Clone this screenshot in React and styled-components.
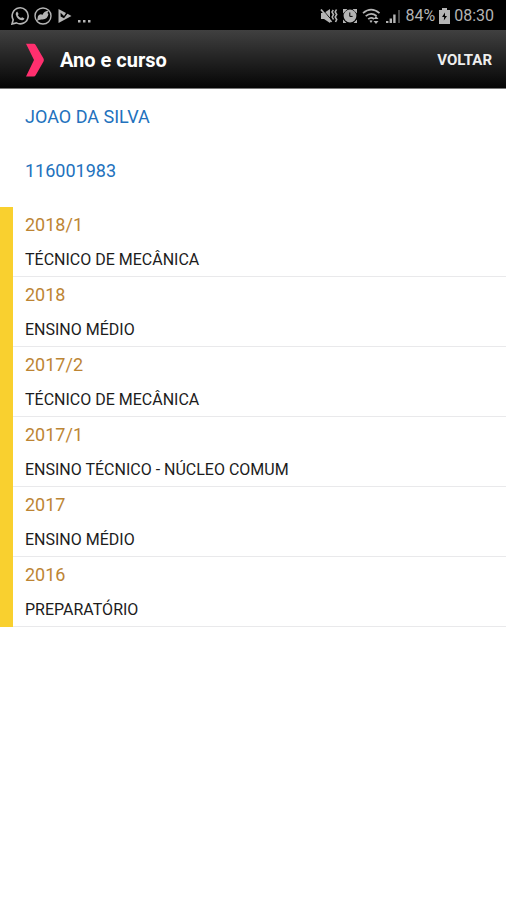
import React from "react";
import styled, { createGlobalStyle } from "styled-components";

const GlobalStyle = createGlobalStyle`
  *, *::before, *::after { box-sizing: border-box; }
  body { margin: 0; background: #fff; font-family: Roboto, "Noto Sans", sans-serif; }
`;

const StatusBar = styled.div`
  display: flex;
  justify-content: space-between;
  align-items: center;
  height: 30px;
  padding: 2px 12px 0 11px;
  background: #000;
  color: #b4b4b4;
  font-size: 16px;
  line-height: 20px;
`;

const StatusGroup = styled.div`
  display: flex;
  align-items: center;
  gap: ${(p) => p.$gap}px;
`;

const StatusIcon = styled.svg`
  display: block;
  flex: none;
  fill: currentColor;
`;

const Header = styled.header`
  display: flex;
  align-items: center;
  height: 59px;
  padding: 1px 14px 0 26px;
  gap: 16px;
  background: linear-gradient(#404040, #050505);
  border-bottom: 1px solid #777;
  color: #fff;
`;

const Title = styled.h1`
  flex: 1;
  margin: 0;
  font-size: 20px;
  font-weight: 700;
  line-height: 24px;
`;

const BackButton = styled.button`
  padding: 0;
  border: 0;
  background: none;
  color: #eee;
  font: 700 15px/20px Roboto, "Noto Sans", sans-serif;
  cursor: pointer;
`;

const Student = styled.section`
  display: grid;
  gap: 30px;
  padding: 16px 25px 24px;
`;

const StudentText = styled.p`
  margin: 0;
  color: #2271bd;
  font-size: 18px;
  line-height: 24px;
`;

const CourseList = styled.ul`
  margin: 0;
  padding: 0;
  list-style: none;
`;

const CourseRow = styled.li`
  display: grid;
  gap: 12px;
  padding: 6px 12px;
  border-left: 13px solid #f9d02f;
  box-shadow: inset 0 -1px #e9e9eb;
`;

const Term = styled.span`
  color: #bd8534;
  font-size: 18px;
  line-height: 24px;
`;

const CourseName = styled.span`
  color: #1c1c1c;
  font-size: 16px;
  line-height: 22px;
`;

const courses = [
  ["2018/1", "TÉCNICO DE MECÂNICA"],
  ["2018", "ENSINO MÉDIO"],
  ["2017/2", "TÉCNICO DE MECÂNICA"],
  ["2017/1", "ENSINO TÉCNICO - NÚCLEO COMUM"],
  ["2017", "ENSINO MÉDIO"],
  ["2016", "PREPARATÓRIO"],
];

const WhatsappIcon = () => (
  <StatusIcon width="18" height="18" viewBox="0 0 18 18" aria-hidden="true">
    <path d="M1 17 2.2 12.8A8 8 0 1 1 5.4 15.9Z" fill="none" stroke="currentColor" strokeWidth="1.6" />
    <path d="M6.2 4.5 7.6 7 6.8 8.2Q8 10.3 10 11.1L11.2 10.2 13.5 11.5Q13 13.5 11 13.3 6 12.5 4.7 7.2 4.7 5 6.2 4.5Z" />
  </StatusIcon>
);

const BirdIcon = () => (
  <StatusIcon width="18" height="18" viewBox="0 0 18 18" aria-hidden="true">
    <circle cx="9" cy="9" r="8" fill="none" stroke="currentColor" strokeWidth="1.4" />
    <path d="M3 14 4 9Q6 6 8.6 7.8 10 4 15 3.5L13.4 6 14.4 7Q13.8 12.2 8.5 12.5 5.2 12 3 14Z" />
  </StatusIcon>
);

const PlayIcon = () => (
  <StatusIcon width="15" height="16" viewBox="0 0 15 16" aria-hidden="true">
    <path d="M1.5 1 9 5 7 8 3.6 4.8V8.5L7 10.2 10.5 5.8 14.5 8 1.5 15Z" />
  </StatusIcon>
);

const MuteIcon = () => (
  <StatusIcon width="18" height="18" viewBox="0 0 18 18" aria-hidden="true">
    <path d="M1 6H4L10 2V16L4 12H1Z" />
    <path d="M2.5 2.5 12 13.5" fill="none" stroke="#000" strokeWidth="1" />
    <path d="M1 2.5 11.5 15" fill="none" stroke="currentColor" strokeWidth="1.8" />
    <path d="M13.3 3 12 5 13.5 7.5 12.2 10 13.5 12.5M16.5 2.5 15.2 5 16.7 7.5 15.2 10 16.7 12.5 15.5 15" fill="none" stroke="currentColor" strokeWidth="1.6" />
  </StatusIcon>
);

const AlarmIcon = () => (
  <StatusIcon width="16" height="16" viewBox="0 0 16 16" aria-hidden="true">
    <circle cx="8" cy="8" r="6.4" />
    <path d="M1 1H5.5L1 5.5ZM15 1H10.5L15 5.5ZM1 15V11.5L4.5 15ZM15 15V11.5L11.5 15Z" />
    <path d="M7.8 4.5V8.4H10.6" fill="none" stroke="#000" strokeWidth="1" />
  </StatusIcon>
);

const WifiIcon = () => (
  <StatusIcon width="20" height="17" viewBox="0 0 20 17" aria-hidden="true">
    <path d="M1 5.2Q9 -1.8 17.5 5.2M3.7 8.2Q9 3.5 14.6 8M6.2 11.2Q9 8.5 12 11" fill="none" stroke="currentColor" strokeWidth="1.7" />
    <path d="M7.4 12.8Q9 11.5 10.6 12.8L9 15ZM14 8 16.5 11H11.5ZM14 16 11.5 13H16.5Z" />
  </StatusIcon>
);

const SignalIcon = () => (
  <StatusIcon width="15" height="16" viewBox="0 0 15 16" aria-hidden="true">
    <path d="M0 13H2.4V15H0ZM3.6 10.5H6V15H3.6ZM7.2 6.5H9.6V15H7.2Z" />
    <path d="M12 2H14V15H12Z" opacity=".4" />
  </StatusIcon>
);

const BatteryIcon = () => (
  <StatusIcon width="11" height="16" viewBox="0 0 11 16" aria-hidden="true">
    <path d="M3 0H8V2H11V16H0V2H3Z" />
    <path d="M6 4.5 3 9H5.2L4.8 12.5 8 8H6Z" fill="#000" />
  </StatusIcon>
);

const Chevron = () => (
  <svg width="18" height="34" viewBox="0 0 18 34" aria-hidden="true">
    <path d="M0 .8H7.5Q9 .8 9.8 2.2L17.5 15.4Q18.2 17 17.5 18.5L9.8 32Q9 33.5 7.5 33.5H0L8 17Z" fill="#ff2f6e" />
  </svg>
);

export default function App() {
  return (
    <>
      <GlobalStyle />
      <StatusBar>
        <StatusGroup $gap={5}>
          <WhatsappIcon />
          <BirdIcon />
          <PlayIcon />
          <StatusIcon width="14" height="18" viewBox="0 0 14 18" aria-hidden="true">
            <path d="M1 13H3.5V15.5H1ZM6 13H8.5V15.5H6ZM11 13H13.5V15.5H11Z" />
          </StatusIcon>
        </StatusGroup>
        <StatusGroup $gap={4}>
          <MuteIcon />
          <AlarmIcon />
          <WifiIcon />
          <SignalIcon />
          <span>84%</span>
          <BatteryIcon />
          <span>08:30</span>
        </StatusGroup>
      </StatusBar>
      <Header>
        <Chevron />
        <Title>Ano e curso</Title>
        <BackButton type="button">VOLTAR</BackButton>
      </Header>
      <main>
        <Student>
          <StudentText>JOAO DA SILVA</StudentText>
          <StudentText>116001983</StudentText>
        </Student>
        <CourseList>
          {courses.map(([term, name]) => (
            <CourseRow key={term}>
              <Term>{term}</Term>
              <CourseName>{name}</CourseName>
            </CourseRow>
          ))}
        </CourseList>
      </main>
    </>
  );
}
